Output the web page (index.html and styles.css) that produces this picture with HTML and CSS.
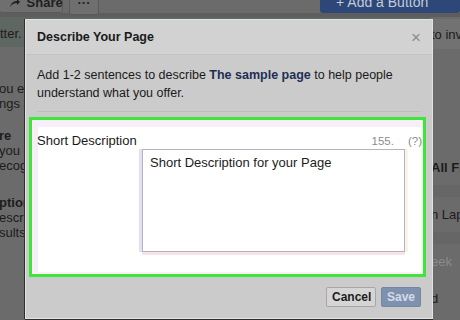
FILE: index.html
```html
<!DOCTYPE html>
<html lang="en">
<head>
    <meta charset="UTF-8">
    <title>Describe Your Page</title>
    <link rel="stylesheet" href="styles.css">
</head>
<body>
    <div class="page">
        <div class="topbar">
            <div class="top-left">
                <span class="top-btn share-btn">
                    <svg width="11" height="8" viewBox="0 0 11 8"><path d="M1 8 C2 4 5 2 8 2 L8 0 L11 3 L8 6 L8 4 C5 4 3 5 1 8 Z" fill="#1f1f1f"/></svg>
                    Share
                </span>
                <span class="top-btn more-btn">&middot;&middot;&middot;</span>
            </div>
            <span class="add-btn">+ Add a Button</span>
        </div>
        <div class="main">
            <div class="left-col">
                <div class="note">tter.</div>
                <div class="para">
                    <div>ou expect</div>
                    <div>ngs and</div>
                </div>
                <div class="para">
                    <div class="strong">re</div>
                    <div>you bring</div>
                    <div>ecognize</div>
                </div>
                <div class="para">
                    <div class="strong">ption</div>
                    <div>escription</div>
                    <div>sults when</div>
                </div>
            </div>
            <div class="right-col">
                <div class="invite">to invite</div>
                <div class="side-item strong">All Friends</div>
                <div class="side-band"></div>
                <div class="side-item">n Laptop</div>
                <div class="side-band"></div>
                <div class="side-item faded">eek</div>
                <div class="side-item">d</div>
            </div>
        </div>
    </div>

    <div class="modal">
        <div class="modal-header">
            <h2>Describe Your Page</h2>
            <span class="close">&times;</span>
        </div>
        <div class="modal-body">
            <p>Add 1-2 sentences to describe <b>The sample page</b> to help people<br>understand what you offer.</p>
            <div class="divider"></div>
            <div class="field">
                <div class="field-row">
                    <span class="field-label">Short Description</span>
                    <span class="counter">155.</span>
                    <span class="help">(?)</span>
                </div>
                <div class="textbox">Short Description for your Page</div>
            </div>
        </div>
        <div class="modal-footer">
            <button class="btn cancel">Cancel</button>
            <button class="btn save">Save</button>
        </div>
    </div>
</body>
</html>
```

FILE: styles.css
```css
body {
    margin: 0;
    width: 460px;
    height: 320px;
    overflow: hidden;
    background-color: #6b6b6b;
    font-family: "Liberation Sans", Arial, sans-serif;
    color: #1c1c1c;
}
.page { width: 460px; height: 320px; }

.topbar {
    height: 13px;
    display: flex;
    justify-content: space-between;
    border-bottom: 4px solid #5d5d5d;
}
.top-left { display: flex; gap: 6px; }
.top-btn {
    height: 22px;
    margin-top: -9px;
    background-color: #6f6f6f;
    border: 1px solid #5a5a5a;
    border-radius: 3px;
    font-size: 13px;
    font-weight: bold;
    line-height: 22px;
    color: #1f1f1f;
    white-space: nowrap;
}
.share-btn { width: 64px; padding-left: 9px; box-sizing: border-box; margin-left: -1px; }
.share-btn svg { margin-right: 3px; }
.more-btn { width: 28px; text-align: center; }
.add-btn {
    width: 140px;
    height: 22px;
    margin-top: -9px;
    padding-left: 16px;
    box-sizing: border-box;
    background-color: #2c4778;
    border-radius: 3px;
    color: #c3cbd9;
    font-size: 14px;
    line-height: 22px;
    white-space: nowrap;
}

.main {
    display: grid;
    grid-template-columns: 1fr 30px;
    font-size: 13px;
}
.left-col { overflow: hidden; white-space: nowrap; }
.left-col div { line-height: 15px; }
.note {
    height: 30px;
    padding-top: 9px;
    box-sizing: border-box;
    background-color: #5f6763;
}
.para { margin-left: -1px; margin-top: 34px; }
.para:nth-child(3) { margin-top: 17px; }
.para:nth-child(4) { margin-top: 22px; }
.strong { font-weight: bold; }

.right-col {
    overflow: hidden;
    white-space: nowrap;
    padding-top: 2px;
}
.invite {
    height: 30px;
    padding: 8px 0 0 1px;
    box-sizing: border-box;
    background-color: #727272;
}
.side-item { line-height: 15px; margin-left: 1px; }
.right-col .strong { margin-top: 111px; font-weight: 600; }
.right-col .side-item:last-child { margin-top: 22px; }
.faded { color: #8a8a8a; }
.side-band {
    height: 12px;
    margin: 10px 0;
    background-color: #666;
}

.modal {
    position: absolute;
    left: 25px;
    top: 19px;
    width: 408px;
    height: 300px;
    box-sizing: border-box;
    background-color: #cbcbcb;
    border: 1px solid #e2e2e2;
    box-shadow: -1px 0 0 #2e2e2e, 0 1px 0 #2e2e2e;
    display: flex;
    flex-direction: column;
}
.modal-header {
    height: 35px;
    box-sizing: border-box;
    padding: 0 11px;
    display: flex;
    align-items: center;
    justify-content: space-between;
    background-color: #d2d2d2;
    border-bottom: 1px solid #c3c3c3;
}
.modal-header h2 {
    margin: 0;
    font-size: 12.5px;
    font-weight: bold;
    color: #1a1a1a;
}
.close {
    font-size: 17px;
    color: #8b8b8b;
    line-height: 17px;
}
.modal-body { padding: 11px 11px 0; }
.modal-body p {
    margin: 0;
    font-size: 12.5px;
    line-height: 18px;
    color: #1a1a1a;
    white-space: nowrap;
}
.modal-body b { color: #1e2f55; }
.divider {
    margin-top: 9px;
    border-top: 1px solid #bdbdbd;
}
.field {
    margin: 5px -5px 0 -8px;
    height: 160px;
    box-sizing: border-box;
    border: 3px solid #3ee63b;
    background-color: #fff;
    box-shadow: inset 0 0 0 2px #fbf0f4, inset 2px 3px 0 4px #f6eef8;
    padding: 0 0 0 5px;
    overflow: hidden;
}
.field-row {
    display: flex;
    align-items: baseline;
    padding-top: 12px;
    height: 30px;
    box-sizing: border-box;
    font-size: 13px;
    line-height: 18px;
}
.field-label { flex: 1; color: #1a1a1a; }
.counter { color: #8c8c8c; font-size: 11.5px; margin-right: 14px; }
.help { color: #8c8c8c; font-size: 11.5px; margin-right: 1px; }
.textbox {
    margin: -1px 0 0 105px;
    width: 263px;
    height: 103px;
    box-sizing: border-box;
    padding: 4px 7px;
    border: 1px solid #b4b4c0;
    box-shadow: -3px 0 0 #e3e0f6, 0 3px 0 #f6e4ea, 3px 0 0 #fbf4e4;
    font-size: 13px;
    line-height: 18px;
    color: #1c1c1c;
}

.modal-footer {
    flex: 1;
    display: flex;
    justify-content: flex-end;
    align-items: flex-start;
    gap: 5px;
    padding: 10px 11px 0 0;
}
.btn {
    height: 20px;
    padding: 0 5px;
    border-radius: 2px;
    font-family: "Liberation Sans", Arial, sans-serif;
    font-size: 12px;
    font-weight: bold;
    cursor: pointer;
}
.cancel {
    width: 50px;
    background-color: #d5d5d5;
    border: 1px solid #a7a7a7;
    color: #1d1d1d;
}
.save {
    width: 40px;
    background-color: #7e92b0;
    border: 1px solid #7386a5;
    color: #d5dbe6;
}
```
